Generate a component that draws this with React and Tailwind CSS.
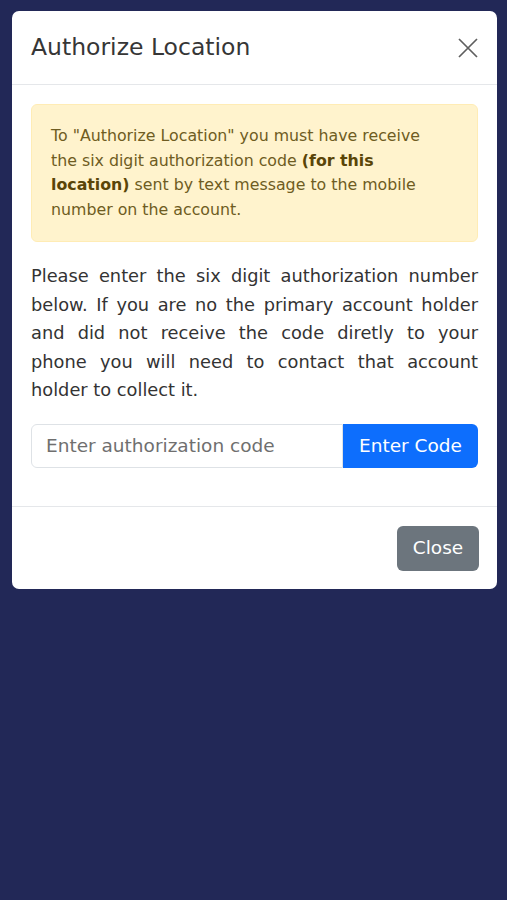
import React, { useState } from 'react';

export default function App() {
  const [code, setCode] = useState('');

  return (
    <div className="min-h-[900px] w-full bg-[#222857] pt-[11px] pl-[12px] pr-[10px]" style={{ fontFamily: '"DejaVu Sans", "Open Sans", sans-serif' }}>
      <div className="bg-white rounded-[7px] overflow-hidden">
        <div className="h-[74px] flex items-center justify-between pl-[19px] pr-[17px] border-b border-[#e5e7ea]">
          <h1 className="text-[23.5px] text-[#363636] font-normal">Authorize Location</h1>
          <button className="w-[24px] h-[24px] flex items-center justify-center text-[#5f5f5f]" aria-label="Close">
            <svg width="20" height="20" viewBox="0 0 20 20" fill="none" stroke="currentColor" strokeWidth="1.7">
              <path d="M1 1L19 19M19 1L1 19" />
            </svg>
          </button>
        </div>

        <div className="px-[19px] pt-[19px] pb-[38px]">
          <div className="bg-[#fff3cd] border border-[#ffecb5] rounded-[6px] pl-[19px] pr-[32px] py-[19px] text-[#6e5c22] text-[15.8px] leading-[24.5px]">
            To "Authorize Location" you must have receive the six digit authorization code <b className="text-[#5a4508] font-bold">(for this location)</b> sent by text message to the mobile number on the account.
          </div>

          <p className="mt-[20px] text-[17.8px] leading-[28.5px] text-[#333] text-justify">
            Please enter the six digit authorization number below. If you are no the primary account holder and did not receive the code diretly to your phone you will need to contact that account holder to collect it.
          </p>

          <div className="mt-[19px] flex h-[44px]">
            <input
              value={code}
              onChange={e => setCode(e.target.value)}
              placeholder="Enter authorization code"
              className="flex-1 min-w-0 border border-[#dee2e6] rounded-l-[6px] px-[14px] text-[18.5px] text-[#333] placeholder:text-[#6f6f6f] outline-none"
            />
            <button className="w-[135px] bg-[#0d6efd] text-white text-[18.5px] rounded-r-[6px]">Enter Code</button>
          </div>
        </div>

        <div className="border-t border-[#e5e7ea] px-[18px] pt-[19px] pb-[18px] flex justify-end">
          <button className="w-[82px] h-[45px] bg-[#6c757d] text-white text-[18.5px] rounded-[6px]">Close</button>
        </div>
      </div>
    </div>
  );
}
